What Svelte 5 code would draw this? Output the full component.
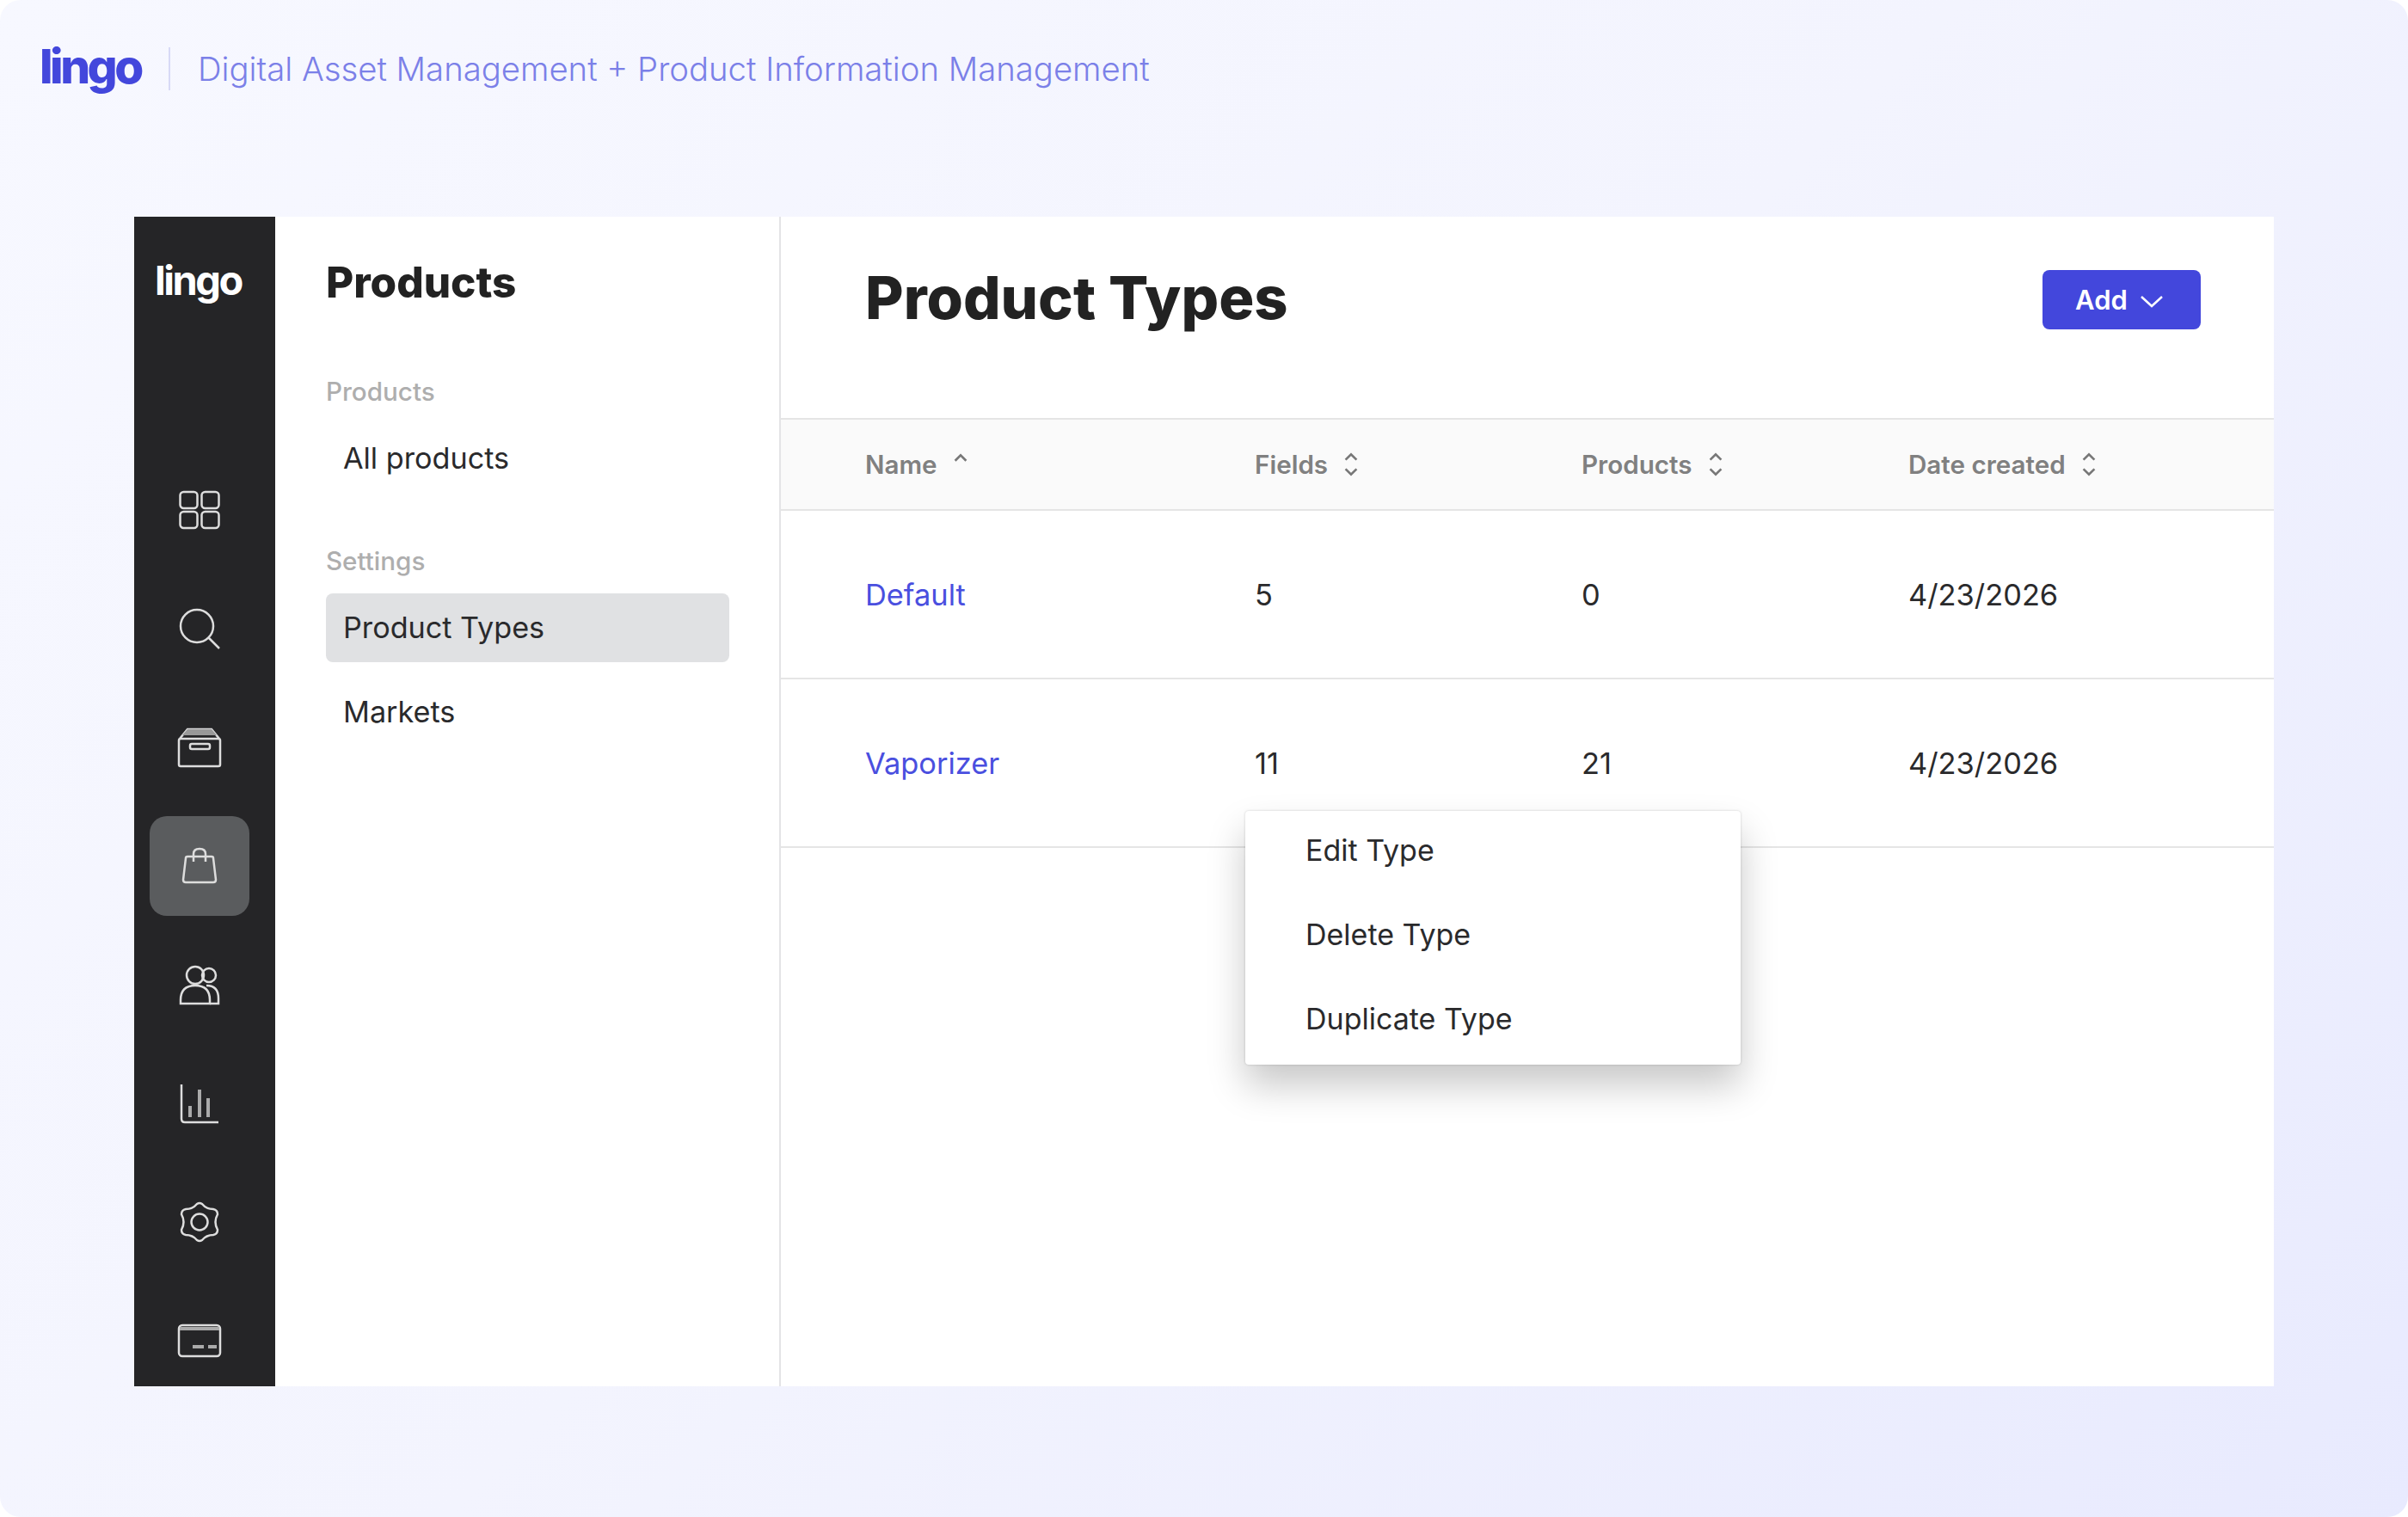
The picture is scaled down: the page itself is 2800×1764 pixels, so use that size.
<script>
	let columns = [
		{ label: "Name", sort: "asc" },
		{ label: "Fields", sort: "both" },
		{ label: "Products", sort: "both" },
		{ label: "Date created", sort: "both" },
	];
	let rows = [
		{ name: "Default", fields: 5, products: 0, created: "4/23/2026" },
		{ name: "Vaporizer", fields: 11, products: 21, created: "4/23/2026" },
	];
	let menuItems = ["Edit Type", "Delete Type", "Duplicate Type"];
</script>

<div class="page">
	<header class="top">
		<span class="brand">lingo</span>
		<span class="divider"></span>
		<span class="tagline">Digital Asset Management + Product Information Management</span>
	</header>

	<div class="app">
		<nav class="rail">
			<span class="rail-logo">lingo</span>
			<div class="rail-icons">
				<span class="rail-btn">
					<svg viewBox="0 0 48 48"><rect x="1.5" y="3" width="20" height="19" rx="4" /><rect x="26.5" y="3" width="20" height="19" rx="4" /><rect x="1.5" y="26" width="20" height="19" rx="4" /><rect x="26.5" y="26" width="20" height="19" rx="4" /></svg>
				</span>
				<span class="rail-btn">
					<svg viewBox="0 0 48 48"><circle cx="21" cy="21" r="19" /><path d="M34.5 34.5 L47 47" /></svg>
				</span>
				<span class="rail-btn wide">
					<svg viewBox="0 0 52 48"><rect x="2" y="14" width="48" height="32" rx="2" /><path d="M3 14 L12 3 H40 L49 14" /><path class="fill-grey" d="M12 3 H40 L46 10 H6 Z" /><rect x="15" y="20" width="23" height="6" rx="2" /></svg>
				</span>
				<span class="rail-btn active">
					<svg viewBox="0 0 48 48"><path d="M10 13 H38 Q40 13 40 15 L43 40 Q43 43 40 43 H8 Q5 43 5 40 L8 15 Q8 13 10 13 Z" /><path d="M17 19 V10 Q17 4 24 4 Q31 4 31 10 V19" /></svg>
				</span>
				<span class="rail-btn">
					<svg viewBox="0 0 48 48"><circle cx="19" cy="13" r="10" /><circle cx="35" cy="13" r="8" /><path d="M2 46 V42 Q2 25 19 25 Q36 25 36 42 V46 Z" /><path d="M32 25 Q46 25 46 40 V46 H36" /></svg>
				</span>
				<span class="rail-btn">
					<svg viewBox="0 0 48 48"><path d="M3 2 V42 Q3 46 7 46 H46" /><path class="thick" d="M13 40 V27" /><path class="thick" d="M24 40 V8" /><path class="thick" d="M34 40 V18" /></svg>
				</span>
				<span class="rail-btn">
					<svg viewBox="0 0 48 48"><path d="M21 3 Q24 1 27 3 Q32 9 40 9 Q45 10 45 15 Q40 24 45 33 Q45 38 40 39 Q32 39 27 45 Q24 47 21 45 Q16 39 8 39 Q3 38 3 33 Q8 24 3 15 Q3 10 8 9 Q16 9 21 3 Z" /><circle cx="24" cy="24" r="9.5" /></svg>
				</span>
				<span class="rail-btn wide">
					<svg viewBox="0 0 52 40"><rect x="2" y="2" width="48" height="36" rx="4" /><path class="thick" d="M3 6 H49" /><path class="thick" d="M18 27 H31 M36 27 H46" /></svg>
				</span>
			</div>
		</nav>

		<aside class="panel">
			<h2>Products</h2>
			<div class="group first">Products</div>
			<div class="item">All products</div>
			<div class="group">Settings</div>
			<div class="item selected">Product Types</div>
			<div class="item">Markets</div>
		</aside>

		<main class="content">
			<div class="title-row">
				<h1>Product Types</h1>
				<button class="add">
					Add
					<svg viewBox="0 0 28 16"><path d="M2 2 L14 13 L26 2" /></svg>
				</button>
			</div>

			<div class="table">
				<div class="row head">
					{#each columns as col}
						<div class="cell">
							{col.label}
							{#if col.sort === "asc"}
								<svg class="sort" viewBox="0 0 20 30"><path d="M4 11 L10 5 L16 11" /></svg>
							{:else}
								<svg class="sort" viewBox="0 0 20 30"><path d="M4 10 L10 4 L16 10" /><path d="M4 20 L10 26 L16 20" /></svg>
							{/if}
						</div>
					{/each}
				</div>
				{#each rows as row}
					<div class="row">
						<div class="cell"><span class="link">{row.name}</span></div>
						<div class="cell">{row.fields}</div>
						<div class="cell">{row.products}</div>
						<div class="cell">{row.created}</div>
					</div>
				{/each}

				<ul class="menu">
					{#each menuItems as label}
						<li>{label}</li>
					{/each}
				</ul>
			</div>
		</main>
	</div>
</div>

<style>
	:global(body) {
		margin: 0;
		background: #fff;
	}

	.page {
		width: 2800px;
		height: 1764px;
		border-radius: 24px;
		background: linear-gradient(135deg, #f7f8ff 0%, #f3f4fe 50%, #e8eafe 100%);
		font-family: Inter, "Noto Sans", sans-serif;
		color: #222;
		overflow: hidden;
	}

	.top {
		height: 252px;
		box-sizing: border-box;
		padding: 47px 0 0 46px;
		display: flex;
		align-items: flex-start;
	}

	.brand {
		font-size: 55px;
		line-height: 60px;
		font-weight: 800;
		letter-spacing: -3.5px;
		color: #4347dc;
		width: 122px;
	}

	.divider {
		width: 2px;
		height: 50px;
		margin: 8px 32px 0 28px;
		background: #d8daf6;
	}

	.tagline {
		font-size: 38.3px;
		line-height: 64px;
		font-weight: 300;
		color: #7b80e8;
		white-space: nowrap;
		margin-top: 1px;
	}

	.app {
		margin-left: 156px;
		width: 2488px;
		height: 1360px;
		display: flex;
		background: #fff;
	}

	.rail {
		width: 164px;
		flex: none;
		background: #252527;
		display: flex;
		flex-direction: column;
	}

	.rail-logo {
		height: 78px;
		margin-top: 39px;
		padding-left: 24px;
		font-size: 47px;
		line-height: 70px;
		font-weight: 700;
		letter-spacing: -2.5px;
		color: #fff;
	}

	.rail-icons {
		margin: 163px 0 0 18px;
		display: flex;
		flex-direction: column;
	}

	.rail-btn {
		width: 116px;
		height: 138px;
		display: flex;
		align-items: center;
		justify-content: center;
		position: relative;
	}

	.rail-btn svg {
		width: 48px;
		height: 48px;
		fill: none;
		stroke: #ddd;
		stroke-width: 2.5;
		position: relative;
	}

	.rail-btn.wide svg {
		width: 52px;
	}

	.rail-btn.active::before {
		content: "";
		position: absolute;
		left: 0;
		top: 11px;
		width: 116px;
		height: 116px;
		border-radius: 20px;
		background: #5a5c5e;
	}

	.rail-btn .fill-grey {
		fill: #999;
		stroke: none;
	}

	.rail-btn .thick {
		stroke-width: 4;
		stroke: #aaa;
	}

	.panel {
		width: 588px;
		flex: none;
		box-sizing: border-box;
		padding: 44px 58px 0 59px;
		border-right: 2px solid #e4e4e6;
	}

	.panel h2 {
		margin: 0;
		font-size: 49.4px;
		line-height: 64px;
		font-weight: 800;
		color: #222;
	}

	.group {
		margin-top: 59px;
		font-size: 29.6px;
		line-height: 40px;
		font-weight: 500;
		color: #aeaeae;
	}

	.group.first {
		margin-top: 75px;
	}

	.item {
		height: 80px;
		margin-top: 18px;
		padding-left: 20px;
		border-radius: 8px;
		font-size: 34.2px;
		line-height: 80px;
		color: #2a2a2c;
	}

	.item.selected {
		background: #e0e1e3;
	}

	.content {
		flex: 1;
		display: flex;
		flex-direction: column;
	}

	.title-row {
		height: 234px;
		padding: 0 85px 0 98px;
		display: flex;
		align-items: flex-start;
		justify-content: space-between;
	}

	.title-row h1 {
		margin: 53px 0 0;
		font-size: 68.5px;
		line-height: 84px;
		font-weight: 800;
		color: #222;
	}

	.add {
		margin-top: 62px;
		width: 184px;
		height: 69px;
		border: none;
		border-radius: 8px;
		background: #4347dc;
		color: #fff;
		font-family: inherit;
		font-size: 31px;
		font-weight: 600;
		display: flex;
		align-items: center;
		justify-content: center;
		gap: 14px;
	}

	.add svg {
		width: 28px;
		height: 16px;
		margin-top: 4px;
		margin-right: 5px;
		fill: none;
		stroke: #fff;
		stroke-width: 2.5;
	}

	.table {
		position: relative;
	}

	.row {
		box-sizing: border-box;
		display: grid;
		grid-template-columns: 453px 380px 380px 1fr;
		padding-left: 98px;
		height: 196px;
		align-items: center;
		border-bottom: 2px solid #e5e5e5;
		font-size: 34.4px;
		color: #2a2a2c;
	}

	.row.head {
		height: 108px;
		border-top: 2px solid #e5e5e5;
		background: #fafafa;
		font-size: 29.6px;
		font-weight: 600;
		color: #808080;
	}

	.cell {
		display: flex;
		align-items: center;
		gap: 16px;
	}

	.sort {
		width: 22px;
		height: 32px;
		fill: none;
		stroke: #777;
		stroke-width: 2.5;
	}

	.link {
		color: #4a4fdf;
	}

	.menu {
		position: absolute;
		left: 540px;
		top: 457px;
		width: 576px;
		height: 295px;
		margin: 0;
		padding: 0;
		list-style: none;
		box-sizing: border-box;
		background: #fff;
		border-radius: 4px;
		box-shadow: 0 0 3px rgba(0, 0, 0, 0.18), 0 24px 44px rgba(0, 0, 0, 0.22);
	}

	.menu li {
		height: 98px;
		padding-left: 70px;
		font-size: 34px;
		line-height: 92px;
		color: #2a2a2c;
	}
</style>
